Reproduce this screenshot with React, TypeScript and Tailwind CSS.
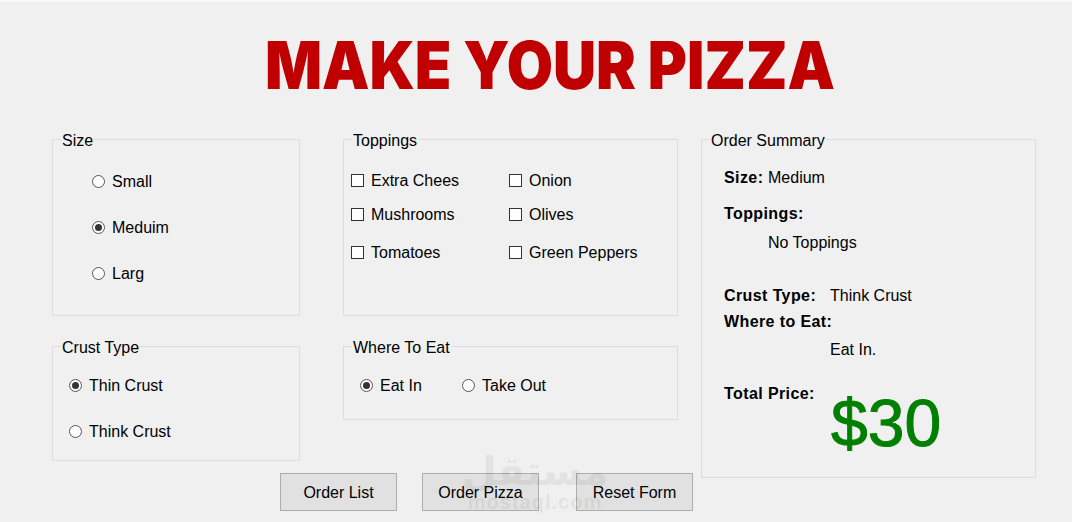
import React from 'react';

const Radio: React.FC<{ label: string; checked?: boolean; className?: string }> = ({ label, checked, className }) => (
  <label className={`flex items-center h-[18px] ${className ?? ''}`}>
    <span className="w-[13px] h-[13px] rounded-full border border-[#555555] bg-white flex items-center justify-center shrink-0">
      {checked && <span className="w-[7px] h-[7px] rounded-full bg-[#333333]" />}
    </span>
    <span className="ml-[7px] pt-[2px]">{label}</span>
  </label>
);

const Check: React.FC<{ label: string }> = ({ label }) => (
  <label className="flex items-center h-[18px]">
    <span className="w-[13px] h-[13px] border border-[#333333] bg-white shrink-0" />
    <span className="ml-[7px] pt-[2px]">{label}</span>
  </label>
);

const Group: React.FC<{ title: string; className: string; bodyClass: string; children: React.ReactNode }> = ({
  title,
  className,
  bodyClass,
  children,
}) => (
  <fieldset className={`border border-[#dcdcdc] ${className}`}>
    <legend className="ml-[8px] px-[1px] h-[19px] leading-[21px]">{title}</legend>
    <div className={bodyClass}>{children}</div>
  </fieldset>
);

const Label: React.FC<{ text: string }> = ({ text }) => <b className="tracking-[0.4px]">{text}:</b>;

const Button: React.FC<{ label: string; className: string }> = ({ label, className }) => (
  <button type="button" className={`w-[117px] h-[38px] pt-[1px] bg-[#e1e1e1] border border-[#adadad] ${className}`}>
    {label}
  </button>
);

export default function App() {
  return (
    <div className="relative w-[1072px] h-[522px] overflow-hidden bg-[#f0f0f0] border-t-2 border-[#f8f8f8] text-black text-[16px] leading-[18px] font-['Liberation_Sans',Arial,sans-serif]">
      <div className="h-[128px] flex items-start justify-center pl-[27px]">
        <h1 className="mt-[23px] text-[66px] leading-[80px] font-black scale-x-[0.905] whitespace-nowrap text-[#c00000] font-['Inter',sans-serif]">
          MAKE YOUR PIZZA
        </h1>
      </div>

      <div className="flex pl-[52px]">
        <div className="w-[641px]">
          <div className="flex">
            <Group title="Size" className="w-[248px] h-[186px]" bodyClass="pl-[39px] pt-[23px] flex flex-col gap-[28px]">
              <Radio label="Small" />
              <Radio label="Meduim" checked />
              <Radio label="Larg" />
            </Group>
            <Group title="Toppings" className="w-[335px] h-[186px] ml-[43px]" bodyClass="pl-[7px] pt-[22px]">
              <div className="grid grid-cols-[158px_1fr] gap-y-[16px]">
                <Check label="Extra Chees" />
                <Check label="Onion" />
                <Check label="Mushrooms" />
                <Check label="Olives" />
              </div>
              <div className="grid grid-cols-[158px_1fr] mt-[20px]">
                <Check label="Tomatoes" />
                <Check label="Green Peppers" />
              </div>
            </Group>
          </div>

          <div className="flex items-start mt-[21px]">
            <Group title="Crust Type" className="w-[248px] h-[124px]" bodyClass="pl-[16px] pt-[20px] flex flex-col gap-[28px]">
              <Radio label="Thin Crust" checked />
              <Radio label="Think Crust" />
            </Group>
            <Group title="Where To Eat" className="w-[335px] h-[83px] ml-[43px]" bodyClass="pl-[16px] pt-[20px] flex">
              <Radio label="Eat In" checked className="w-[102px]" />
              <Radio label="Take Out" />
            </Group>
          </div>

          <div className="flex mt-[12px] pl-[228px]">
            <Button label="Order List" className="" />
            <Button label="Order Pizza" className="ml-[25px]" />
            <Button label="Reset Form" className="ml-[37px]" />
          </div>
        </div>

        <Group title="Order Summary" className="w-[335px] h-[348px] ml-[8px]" bodyClass="pl-[22px] pt-[20px] flex flex-col">
          <div className="flex">
            <span className="w-[44px]"><Label text="Size" /></span>
            <span>Medium</span>
          </div>
          <div className="mt-[18px]"><Label text="Toppings" /></div>
          <div className="mt-[11px] ml-[44px]">No Toppings</div>
          <div className="mt-[35px] flex">
            <span className="w-[106px]"><Label text="Crust Type" /></span>
            <span>Think Crust</span>
          </div>
          <div className="mt-[8px]"><Label text="Where to Eat" /></div>
          <div className="mt-[10px] ml-[106px]">Eat In.</div>
          <div className="mt-[26px] flex items-start">
            <span className="w-[106px]"><Label text="Total Price" /></span>
            <span className="ml-[1px] text-[66px] leading-[76px] text-[#008000] [-webkit-text-stroke:1px_#008000]">$30</span>
          </div>
        </Group>
      </div>

      {/* site watermark sits over everything */}
      <div className="absolute left-[468px] top-[448px] w-[134px] flex flex-col items-center text-black opacity-[0.05] pointer-events-none">
        <span className="text-[40px] leading-[42px] font-bold font-['DejaVu_Sans',sans-serif]">مستقل</span>
        <span className="text-[20px] leading-[20px] font-bold tracking-[1px]">mostaql.com</span>
      </div>
    </div>
  );
}
